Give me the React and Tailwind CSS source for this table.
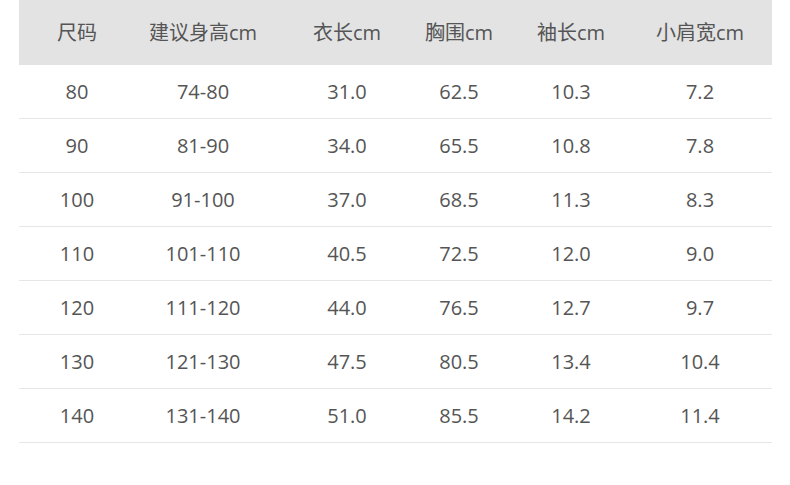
const headers = ["尺码", "建议身高cm", "衣长cm", "胸围cm", "袖长cm", "小肩宽cm"];

const rows = [
  ["80", "74-80", "31.0", "62.5", "10.3", "7.2"],
  ["90", "81-90", "34.0", "65.5", "10.8", "7.8"],
  ["100", "91-100", "37.0", "68.5", "11.3", "8.3"],
  ["110", "101-110", "40.5", "72.5", "12.0", "9.0"],
  ["120", "111-120", "44.0", "76.5", "12.7", "9.7"],
  ["130", "121-130", "47.5", "80.5", "13.4", "10.4"],
  ["140", "131-140", "51.0", "85.5", "14.2", "11.4"],
];

// column widths picked so the text centres line up with the picture
const grid = "grid grid-cols-[116px_136px_152px_72px_152px_106px_19px]";

export default function App() {
  return (
    <div
      className="w-[790px] h-[485px] bg-white pl-[19px] text-[20px] text-[#555]"
      style={{ fontFamily: '"Open Sans", "Noto Sans CJK SC", sans-serif' }}
    >
      <div className="w-[753px]">
        <div className={`${grid} h-[65px] items-center bg-[#e3e3e3]`}>
          {headers.map((h) => (
            <div key={h} className="text-center whitespace-nowrap">
              {h}
            </div>
          ))}
        </div>
        {rows.map((r) => (
          <div key={r[0]} className={`${grid} h-[54px] items-center border-b border-[#e6e6e6]`}>
            {r.map((c, i) => (
              <div key={i} className="text-center">
                {c}
              </div>
            ))}
          </div>
        ))}
      </div>
    </div>
  );
}
